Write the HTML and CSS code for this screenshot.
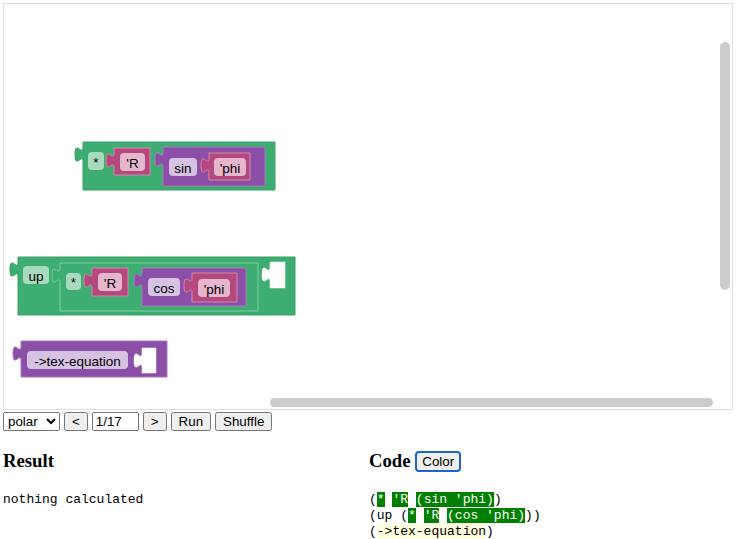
FILE: index.html
```html
<!DOCTYPE html>
<html>
<head>
<meta charset="utf-8">
<link rel="stylesheet" href="styles.css">
</head>
<body>
<div class="workspace">
  <svg class="canvas" width="728" height="405" viewBox="4 4 728 405" xmlns="http://www.w3.org/2000/svg">
    <!-- Block 1: (* 'R (sin 'phi)) -->
    <path class="green" d="M83,142 V147 c0,10 -8,-8 -8,7.5 s8,-2.5 8,7.5 V190 H275 V142 Z"/>
    <rect class="pill-g" x="88" y="152" width="16" height="18" rx="4"/>
    <text class="lbl" x="96" y="162">*</text>
    <path class="pink" d="M114,148 V153 c0,10 -8,-8 -8,7.5 s8,-2.5 8,7.5 V175 H150 V148 Z"/>
    <rect class="pill-p" x="120" y="153" width="25" height="18" rx="4"/>
    <text class="lbl" x="132.5" y="163">'R</text>
    <path class="purple" d="M163,147 V152 c0,10 -8,-8 -8,7.5 s8,-2.5 8,7.5 V186 H265 V147 Z"/>
    <rect class="pill-u" x="169" y="158" width="28" height="18" rx="4"/>
    <text class="lbl" x="183" y="168">sin</text>
    <path class="pink" d="M209,153 V158 c0,10 -8,-8 -8,7.5 s8,-2.5 8,7.5 V180 H250 V153 Z"/>
    <rect class="pill-p" x="214" y="158" width="32" height="18" rx="4"/>
    <text class="lbl" x="230" y="168">'phi</text>

    <!-- Block 2: (up (* 'R (cos 'phi))) -->
    <path class="green" d="M18,257 V262 c0,10 -8,-8 -8,7.5 s8,-2.5 8,7.5 V315 H295 V257 Z"/>
    <rect class="pill-g" x="23" y="266" width="26" height="18" rx="4"/>
    <text class="lbl" x="36" y="276">up</text>
    <path class="green inner" d="M60,263 V268 c0,10 -8,-8 -8,7.5 s8,-2.5 8,7.5 V311 H258 V263 Z"/>
    <rect class="pill-g" x="66" y="273" width="15" height="17" rx="4"/>
    <text class="lbl" x="73.5" y="282.5">*</text>
    <path class="pink" d="M92,268 V273 c0,10 -8,-8 -8,7.5 s8,-2.5 8,7.5 V296 H128 V268 Z"/>
    <rect class="pill-p" x="98" y="273" width="24" height="18" rx="4"/>
    <text class="lbl" x="110" y="283">'R</text>
    <path class="purple" d="M142,268 V273 c0,10 -8,-8 -8,7.5 s8,-2.5 8,7.5 V306 H246 V268 Z"/>
    <rect class="pill-u" x="148" y="278" width="32" height="18" rx="4"/>
    <text class="lbl" x="164" y="288">cos</text>
    <path class="pink" d="M192,273 V278 c0,10 -8,-8 -8,7.5 s8,-2.5 8,7.5 V302 H237 V273 Z"/>
    <rect class="pill-p" x="198" y="279" width="32" height="18" rx="4"/>
    <text class="lbl" x="214" y="289">'phi</text>
    <path class="hole" d="M270,262 V267 c0,10 -8,-8 -8,7.5 s8,-2.5 8,7.5 V288 H285 V262 Z"/>

    <!-- Block 3: (->tex-equation) -->
    <path class="purple" d="M21,341 V346 c0,10 -8,-8 -8,7.5 s8,-2.5 8,7.5 V377 H167 V341 Z"/>
    <rect class="pill-u" x="27" y="351" width="101" height="18" rx="4"/>
    <text class="lbl" x="77.5" y="361">-&gt;tex-equation</text>
    <path class="hole" d="M142,348 V353 c0,10 -8,-8 -8,7.5 s8,-2.5 8,7.5 V373 H156 V348 Z"/>

    <!-- scrollbars -->
    <rect class="scroll" x="720" y="42" width="10" height="248" rx="5"/>
    <rect class="scroll" x="270" y="398" width="443" height="9" rx="4.5"/>
  </svg>
</div>

<div class="controls">
  <select class="picker"><option>polar</option></select>
  <button class="btn">&lt;</button>
  <input class="step" type="text" value="1/17">
  <button class="btn">&gt;</button>
  <button class="btn">Run</button>
  <button class="btn">Shuffle</button>
</div>

<div class="panels">
  <section class="panel">
    <h3 class="title">Result</h3>
    <pre class="out">nothing calculated</pre>
  </section>
  <section class="panel">
    <h3 class="title">Code <button class="color-btn">Color</button></h3>
    <pre class="out">(<span class="hl">*</span> <span class="hl">'R</span> <span class="hl">(sin 'phi)</span>)
(up (<span class="hl">*</span> <span class="hl">'R</span> <span class="hl">(cos 'phi)</span>))
(<span class="hy">-&gt;tex-equation</span>)</pre>
  </section>
</div>
</body>
</html>
```
FILE: styles.css
```css
body {
  margin: 3px;
  font-family: "Liberation Serif", serif;
  background: #fff;
}

.workspace {
  position: relative;
  width: 730px;
  height: 407px;
  box-sizing: border-box;
  border: 1px solid #dddddd;
  overflow: hidden;
}

.canvas {
  display: block;
}

.green { fill: #3ead71; stroke: #36a066; stroke-width: 1; }
.green.inner { fill: #3ead71; stroke: #7ccb9f; }
.pink { fill: #b5487c; stroke: #d08aab; stroke-width: 1; }
.purple { fill: #8c4fa8; stroke: #a97bc0; stroke-width: 1; }
.hole { fill: #ffffff; stroke: #ffffff; stroke-width: 0.5; }

.pill-g { fill: #a8dbbe; }
.pill-p { fill: #e6b6cd; }
.pill-u { fill: #d6c3e3; }

.lbl {
  font-family: "Liberation Sans", Arial, sans-serif;
  font-size: 13.5px;
  fill: #000;
  text-anchor: middle;
  dominant-baseline: central;
}

.scroll { fill: #cccccc; }

.controls {
  margin-top: 2px;
  display: flex;
  align-items: center;
  gap: 4px;
}

.controls select,
.controls button,
.controls input,
.color-btn {
  font-family: "Liberation Sans", Arial, sans-serif;
  font-size: 13.33px;
}

.picker {
  width: 57px;
  height: 19px;
}

.btn {
  height: 19px;
  padding: 0 6px;
}

.step {
  width: 39px;
  height: 13px;
}

.panels {
  display: grid;
  grid-template-columns: 1fr 1fr;
}

.title {
  font-size: 18.72px;
  font-weight: bold;
  margin: 19px 0 20px 0;
}

.color-btn {
  border: 2px solid #1a64d6;
  border-radius: 4px;
  background: #efefef;
  padding: 1px 5px;
  vertical-align: 1px;
}

.out {
  font-family: "Liberation Mono", monospace;
  font-size: 13px;
  line-height: 16px;
  margin: 0;
}

.hl {
  background: #008000;
  color: #ffffff;
}

.hy {
  background: #ffffe0;
}
```
